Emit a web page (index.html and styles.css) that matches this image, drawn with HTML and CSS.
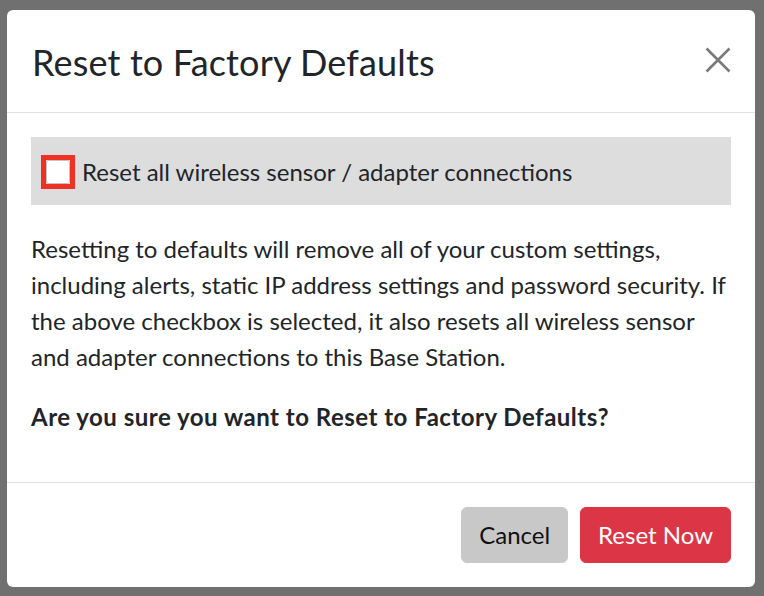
FILE: index.html
```html
<!DOCTYPE html>
<html>
<head>
<meta charset="utf-8">
<title>Reset to Factory Defaults</title>
<link rel="stylesheet" href="styles.css">
</head>
<body>
<div class="modal">
  <div class="modal-header">
    <h5 class="modal-title">Reset to Factory Defaults</h5>
    <button class="close" type="button" aria-label="Close">
      <svg viewBox="0 0 26 26" width="26" height="26"><path d="M1.5 1.5 L24.5 24.5 M24.5 1.5 L1.5 24.5" stroke="#7a7a7a" stroke-width="2.6" fill="none"/></svg>
    </button>
  </div>
  <div class="modal-body">
    <label class="check-row">
      <span class="check-outline"><span class="check-box"></span></span>
      <span class="check-label">Reset all wireless sensor / adapter connections</span>
    </label>
    <p class="desc">Resetting to defaults will remove all of your custom settings, including alerts, static IP address settings and password security. If the above checkbox is selected, it also resets all wireless sensor and adapter connections to this Base Station.</p>
    <p class="confirm">Are you sure you want to Reset to Factory Defaults?</p>
  </div>
  <div class="modal-footer">
    <button class="btn btn-cancel" type="button">Cancel</button>
    <button class="btn btn-reset" type="button">Reset Now</button>
  </div>
</div>
</body>
</html>
```
FILE: styles.css
```css
html, body {
  margin: 0;
  height: 100%;
}
body {
  background: #707070;
  font-family: "Lato", "Liberation Sans", sans-serif;
  color: #212529;
  font-size: 24px;
  line-height: 36px;
  padding: 10px 0 0 7px;
  box-sizing: border-box;
}
.modal {
  width: 748px;
  background: #fff;
  border-radius: 6px;
}
.modal-header {
  display: flex;
  align-items: flex-start;
  justify-content: space-between;
  padding: 25px 24px 23px 25px;
  border-bottom: 1px solid #dee2e6;
}
.modal-title {
  margin: 0;
  font-size: 36px;
  line-height: 54px;
  font-weight: 400;
  letter-spacing: 0.15px;
}
.close {
  background: none;
  border: 0;
  padding: 0;
  margin: 12px 0 0 0;
  width: 26px;
  height: 26px;
  display: block;
}
.close svg { display: block; }
.modal-body {
  padding: 24px;
}
.check-row {
  display: flex;
  align-items: center;
  background: #dddddd;
  padding: 17px 10px 15px;
  gap: 7px;
}
.check-outline {
  display: block;
  border: 5px solid #ee3124;
  line-height: 0;
}
.check-box {
  display: block;
  width: 22px;
  height: 22px;
  background: #fff;
  border: 1px solid #c4c4c4;
  border-radius: 3px;
}
.check-label {
  display: block;
}
.desc {
  margin: 26px 0 24px 0;
}
.confirm {
  margin: 0 0 23px 0;
  font-weight: 700;
  letter-spacing: 0.5px;
}
.modal-footer {
  display: flex;
  justify-content: flex-end;
  gap: 12px;
  padding: 24px;
  border-top: 1px solid #dee2e6;
}
.btn {
  font-family: inherit;
  font-size: 24px;
  line-height: 36px;
  padding: 9px 17px;
  border: 1px solid transparent;
  border-radius: 6px;
}
.btn-cancel {
  background: #c8c8c8;
  border-color: #c8c8c8;
  color: #111;
}
.btn-reset {
  background: #dc3545;
  border-color: #dc3545;
  color: #fff;
}
```
